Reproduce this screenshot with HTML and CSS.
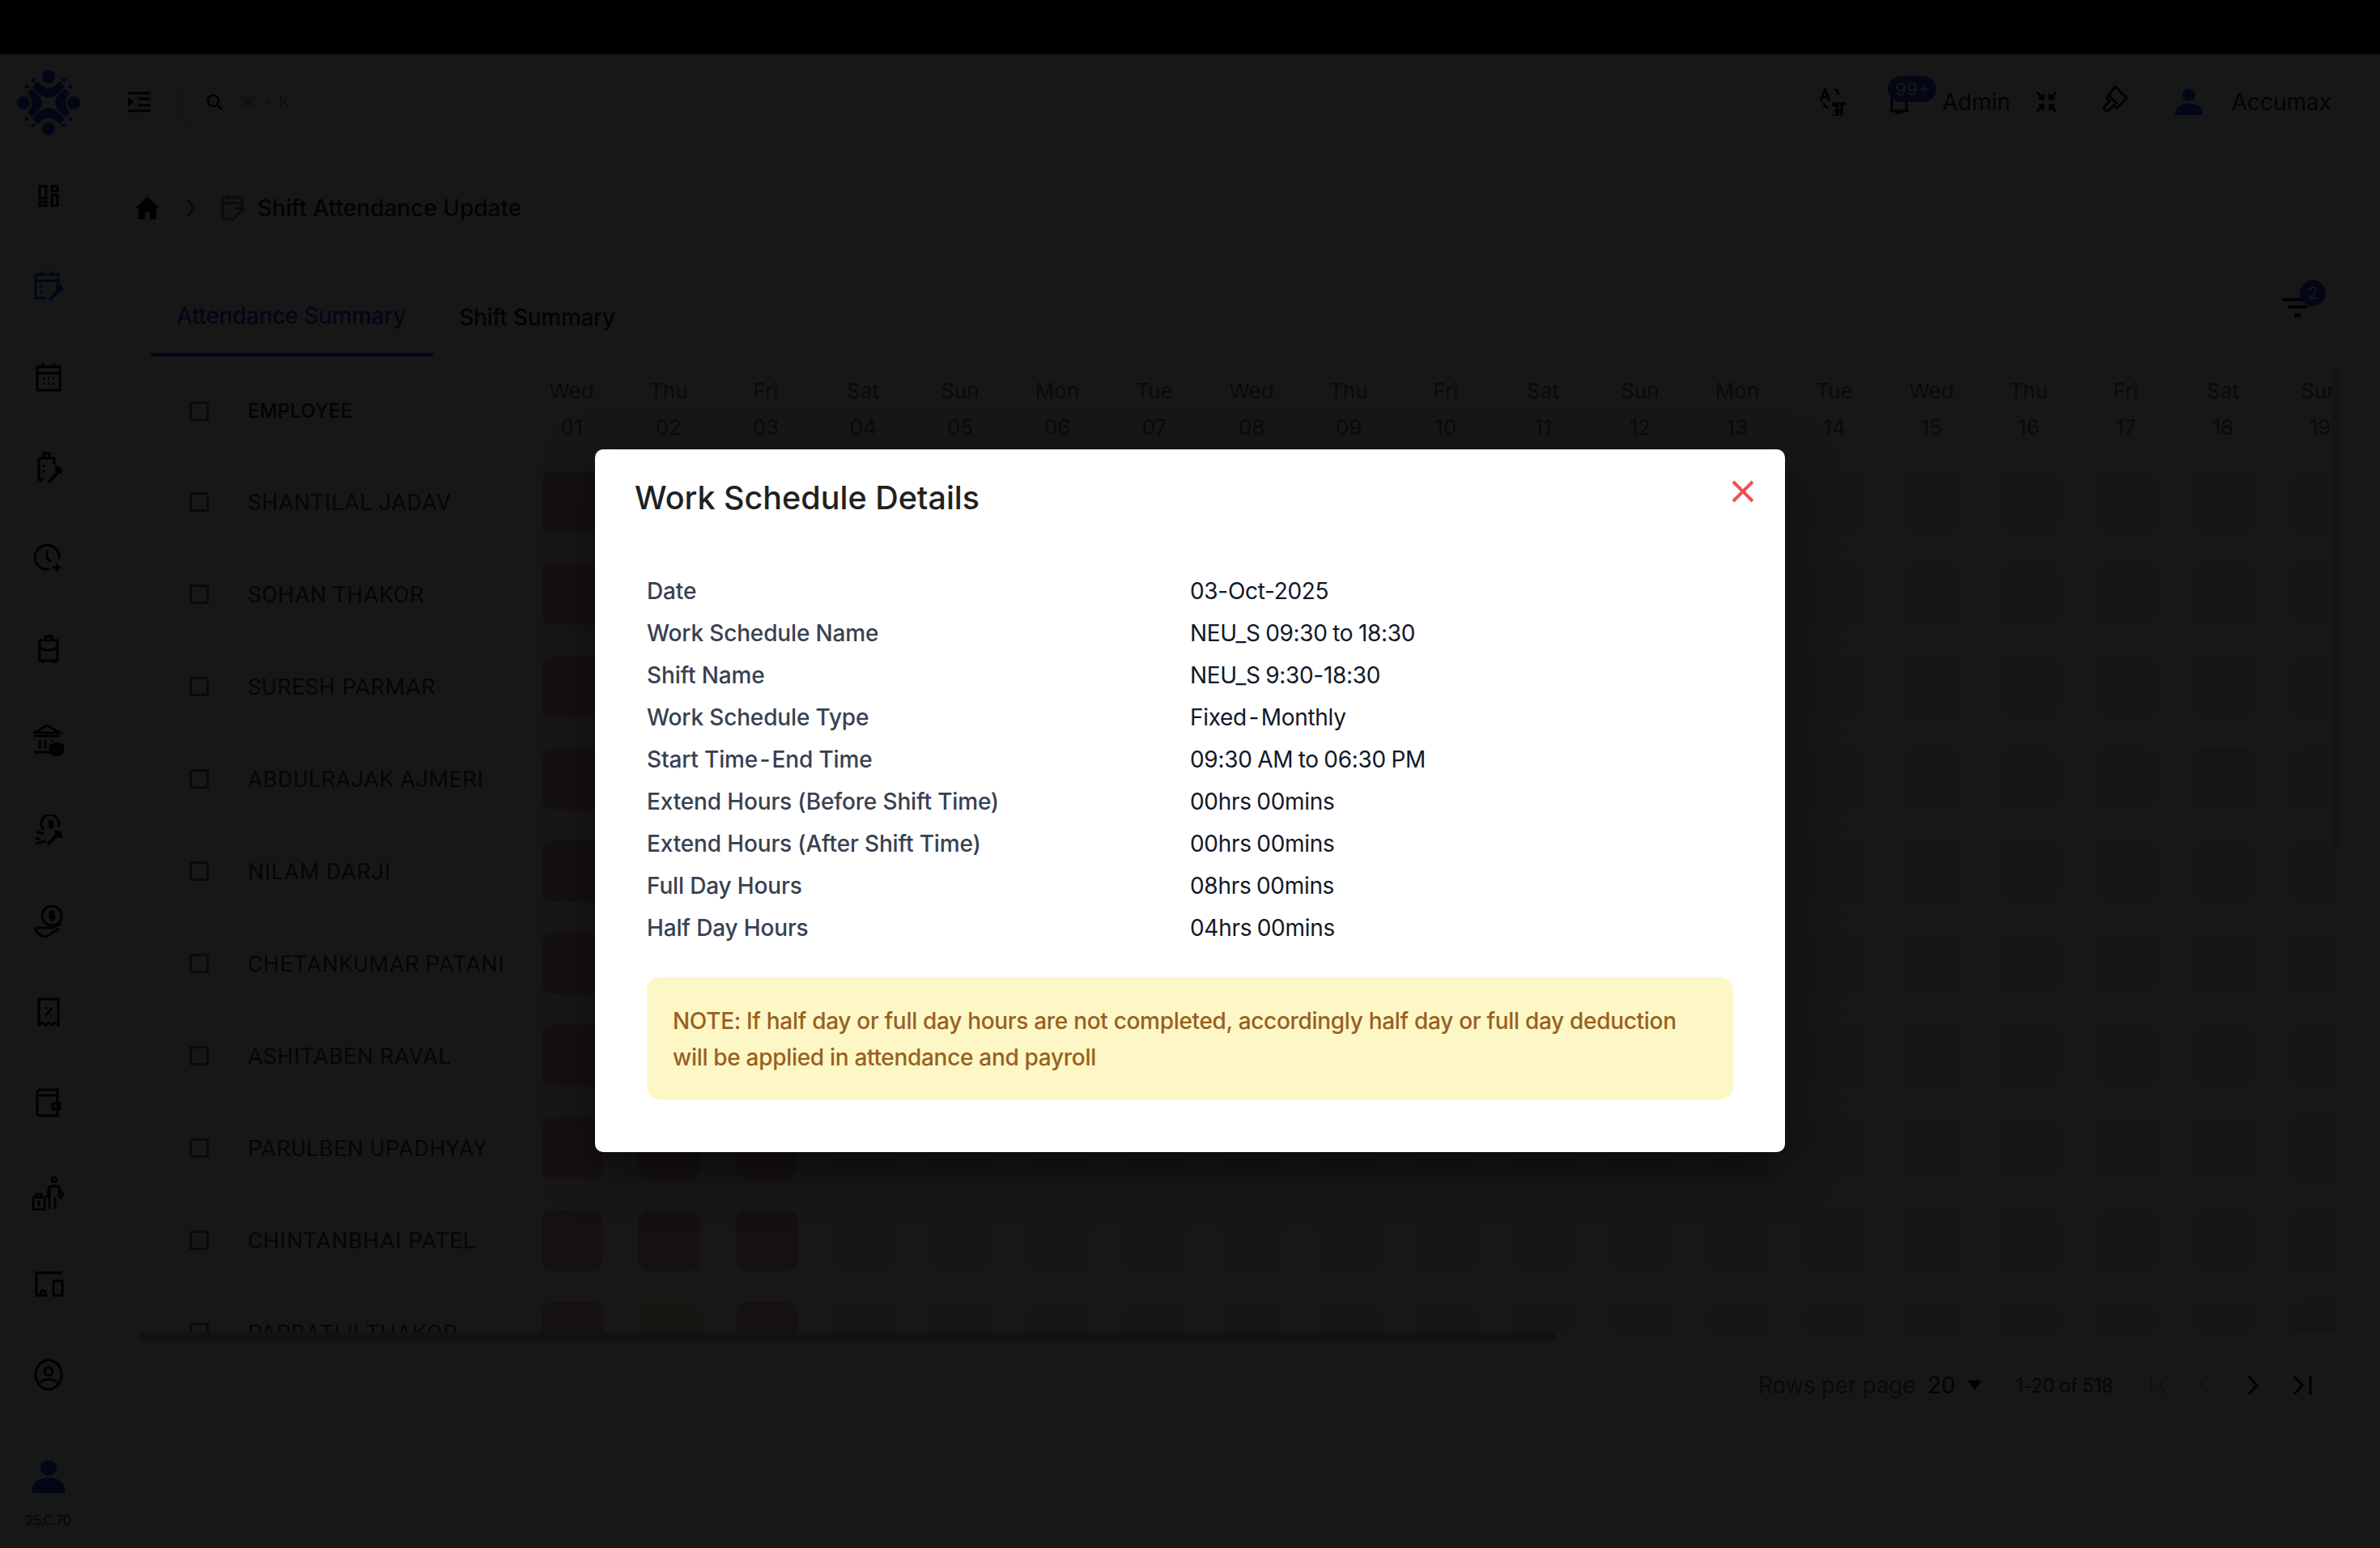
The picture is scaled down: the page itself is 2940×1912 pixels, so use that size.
FILE: index.html
```html
<!DOCTYPE html>
<html>
<head>
  <title>Shift Attendance Update</title>
  <meta name="viewport" content="width=device-width, initial-scale=1.0">
  <link rel="stylesheet" href="styles.css">
</head>
<body>
  <div class="app">
    <aside class="sidebar">
      <div class="logo">
        <svg viewBox="0 0 78 80" width="78" height="80" class="logo-mark">
          <circle cx="39" cy="8" r="8"/>
          <circle cx="39" cy="72" r="8"/>
          <circle cx="8" cy="40" r="8"/>
          <circle cx="70" cy="40" r="8"/>
          <path d="M25 13Q39 30 53 13L59 20Q39 47 19 20z"/>
          <path d="M25 67Q39 50 53 67L59 60Q39 33 19 60z"/>
          <path d="M18 23Q44 40 18 57L13 52Q23 40 13 28z"/>
          <path d="M60 23Q34 40 60 57L65 52Q55 40 65 28z"/>
          <circle cx="20" cy="12" r="2.5"/><circle cx="12" cy="20" r="2.5"/>
          <circle cx="58" cy="12" r="2.5"/><circle cx="66" cy="20" r="2.5"/>
          <circle cx="12" cy="60" r="2.5"/><circle cx="20" cy="68" r="2.5"/>
          <circle cx="58" cy="68" r="2.5"/><circle cx="66" cy="60" r="2.5"/>
        </svg>
      </div>
      <nav class="side-menu">
        <a class="side-item">
          <svg viewBox="0 0 26 28" width="26" height="28" class="icon"><path d="M2 2h8v15H2zM17 2h7v6h-7zM17 13h7v13h-7zM2 21h8v5H2z"/></svg>
        </a>
        <a class="side-item active">
          <svg viewBox="0 0 36 40" width="36" height="40" class="icon"><path d="M10 1v6M23 1v6M2 5h28v14M2 5v29h12M2 13h28M8 20h2M8 27h2"/><path d="M19 37l11-12M27 19a5 5 0 0 1 7 5l-3 0-2-2 0-3z" class="icon-thick"/></svg>
        </a>
        <a class="side-item">
          <svg viewBox="0 0 32 36" width="32" height="36" class="icon"><path d="M9 1v6M23 1v6M2 5h28v29H2zM2 13h28"/><path d="M9 19h2M15 19h2M21 19h2M9 26h2M15 26h2M21 26h2"/></svg>
        </a>
        <a class="side-item">
          <svg viewBox="0 0 36 40" width="36" height="40" class="icon"><path d="M12 8V2h7v6M6 8h19v8M6 8v26h2v3M6 34h6M12 16v3M10 24h3"/><path d="M18 38l12-13M26 20a5 5 0 0 1 7 5l-3 0-2-2 0-3z" class="icon-thick"/></svg>
        </a>
        <a class="side-item">
          <svg viewBox="0 0 36 36" width="36" height="36" class="icon"><path d="M31 19A15 15 0 1 0 19 31M16 8v9l5 5M28 24v10M23 29h10"/></svg>
        </a>
        <a class="side-item">
          <svg viewBox="0 0 26 36" width="26" height="36" class="icon"><path d="M9 7V2h8v5M2 7h22v25H2zM2 15l6 4h10l6-4M6 32v3M20 32v3"/></svg>
        </a>
        <a class="side-item">
          <svg viewBox="0 0 38 40" width="38" height="40" class="icon"><path d="M1 11L17 2l16 9zM1 15h32M8 20v11M15 20v11M24 20v2M1 35h20"/><path d="M29 24l8 3v5c0 4-4 6-8 8-4-2-8-4-8-8v-5z" class="icon-fill"/></svg>
        </a>
        <a class="side-item">
          <svg viewBox="0 0 36 40" width="36" height="40" class="icon"><path d="M12 19a11 11 0 1 1 18-4M21 7v11M24 9h-5v3h4v3h-5M3 22l9 1M2 29l6 2M2 36l12-3"/><path d="M17 37l11-11M26 22a5 5 0 0 1 7 5l-3 0-2-2 0-3z" class="icon-thick"/></svg>
        </a>
        <a class="side-item">
          <svg viewBox="0 0 38 40" width="38" height="40" class="icon"><circle cx="23" cy="13" r="12"/><path d="M23 6v14M27 9h-6v4h5v3h-6M2 28h22l11-5M2 30c6 8 12 9 14 9l16-10"/></svg>
        </a>
        <a class="side-item">
          <svg viewBox="0 0 28 36" width="28" height="36" class="icon"><path d="M2 2h24v32l-4-3-4 3-4-3-4 3-4-3-4 3zM10 23l8-10M10 13h2M16 23h2"/></svg>
        </a>
        <a class="side-item">
          <svg viewBox="0 0 34 36" width="34" height="36" class="icon"><path d="M6 2h22v32H6a3 3 0 0 1-3-3V5a3 3 0 0 1 3-3zM3 9h25M22 19h9v7h-9z"/></svg>
        </a>
        <a class="side-item">
          <svg viewBox="0 0 42 42" width="42" height="42" class="icon"><circle cx="28" cy="4" r="3"/><path d="M22 12h12v14M22 12v28M22 12l-3 14M29 26v14M34 16l5 6-4 6M2 26h14v15H2zM6 26v-4h6v4M9 30v7"/></svg>
        </a>
        <a class="side-item">
          <svg viewBox="0 0 38 32" width="38" height="32" class="icon"><path d="M36 2H4v28h14M25 12h11v18H25zM12 24a3 3 0 1 0 .1 0z"/></svg>
        </a>
        <a class="side-item">
          <svg viewBox="0 0 36 40" width="36" height="40" class="icon"><ellipse cx="18" cy="20" rx="16" ry="18"/><circle cx="18" cy="16" r="5"/><path d="M7 30c6-6 16-6 22 0"/></svg>
        </a>
      </nav>
      <div class="side-user">
        <div class="avatar-big">
          <svg viewBox="0 0 40 40" width="40" height="40" class="solid-blue"><ellipse cx="20" cy="9" rx="10" ry="9.5"/><path d="M0 40V34a20 13 0 0 1 40 0v6z"/></svg>
        </div>
        <span class="version">25.C.70</span>
      </div>
    </aside>

    <main class="main">
      <header class="topbar">
        <div class="topbar-left">
          <button class="menu-btn">
            <svg viewBox="0 0 28 26" width="28" height="26" class="icon"><path d="M0 2h28M12 9h16M12 17h16M0 24h28"/><path d="M0 9l5 4-5 4z" class="icon-fill"/></svg>
          </button>
          <div class="search">
            <svg viewBox="0 0 24 24" width="20" height="20" class="icon"><circle cx="10" cy="10" r="8"/><path d="M16 16l7 7"/></svg>
            <span>⌘ + K</span>
          </div>
        </div>
        <div class="topbar-right">
          <svg viewBox="0 0 32 34" width="32" height="34" class="icon tb-translate"><path d="M1 16L6.500 1 12 16M3 11h7M18 2c3 0 5 2 5 6M5 18c0 4 3 6 6 6M15 19h17M27 19v15M16 22c4-2 7 0 6 3 0 2-3 3-4 3 3 0 5 1 4 4-1 2-4 2-6 1M22 27h5"/></svg>
          <div class="bell">
            <svg viewBox="0 0 24 24" width="24" height="24" class="icon"><path d="M3 0v19M21 0v19M0 20h24M8 22c1 2 7 2 8 0"/></svg>
            <span class="bell-badge">99+</span>
          </div>
          <span class="admin">Admin</span>
          <div class="tb-box">
            <svg viewBox="0 0 26 26" width="26" height="26" class="icon"><path d="M1 1l8 8M9 3v6H3M25 1l-8 8M17 3v6h6M1 25l8-8M9 23v-6H3M25 25l-8-8M17 23v-6h6"/></svg>
          </div>
          <svg viewBox="0 0 34 34" width="34" height="34" class="icon tb-brush"><path d="M18 2l14 14-12 13-4-4-6 6a3 3 0 0 1-5-1 3 3 0 0 1 0-4l6-6-4-4zM9 12l12 12"/></svg>
          <div class="tb-avatar">
            <svg viewBox="0 0 34 32" width="34" height="32" class="solid-blue"><ellipse cx="17" cy="7.500" rx="8" ry="7.500"/><path d="M0 32V28a17 10 0 0 1 34 0v4z"/></svg>
          </div>
          <span class="accumax">Accumax</span>
        </div>
      </header>

      <div class="breadcrumb">
        <svg viewBox="0 0 30 30" width="30" height="30" class="solid-dark"><path d="M15 1L0 15h4v14h8v-9h6v9h8V15h4z"/></svg>
        <svg viewBox="0 0 12 22" width="12" height="22" class="icon icon-dim"><path d="M2 1l8 10-8 10"/></svg>
        <svg viewBox="0 0 30 34" width="30" height="34" class="icon icon-dim"><path d="M8 1v5M20 1v5M2 4h24v12M2 4v26h10M2 11h24M7 17h1M7 23h1"/><path d="M14 32l10-11M22 17a4 4 0 0 1 6 4l-3 0-1-2 0-2z"/></svg>
        <span>Shift Attendance Update</span>
      </div>

      <section class="card">
        <div class="tabs">
          <a class="tab active">Attendance Summary</a>
          <a class="tab">Shift Summary</a>
          <div class="filter">
            <svg viewBox="0 0 36 24" width="36" height="24" class="solid-dark"><path d="M0 0h36v4H0zM6 9h24v4H6zM14 19h8v5h-8z"/></svg>
            <span class="filter-badge">2</span>
          </div>
        </div>

        <div class="table-wrap">
          <div class="t-head">
            <div class="t-emp"><span class="check"></span><span class="t-title">EMPLOYEE</span></div>
            <div class="day"><span>Wed</span><span>01</span></div>
            <div class="day"><span>Thu</span><span>02</span></div>
            <div class="day"><span>Fri</span><span>03</span></div>
            <div class="day"><span>Sat</span><span>04</span></div>
            <div class="day"><span>Sun</span><span>05</span></div>
            <div class="day"><span>Mon</span><span>06</span></div>
            <div class="day"><span>Tue</span><span>07</span></div>
            <div class="day"><span>Wed</span><span>08</span></div>
            <div class="day"><span>Thu</span><span>09</span></div>
            <div class="day"><span>Fri</span><span>10</span></div>
            <div class="day"><span>Sat</span><span>11</span></div>
            <div class="day"><span>Sun</span><span>12</span></div>
            <div class="day"><span>Mon</span><span>13</span></div>
            <div class="day"><span>Tue</span><span>14</span></div>
            <div class="day"><span>Wed</span><span>15</span></div>
            <div class="day"><span>Thu</span><span>16</span></div>
            <div class="day"><span>Fri</span><span>17</span></div>
            <div class="day"><span>Sat</span><span>18</span></div>
            <div class="day"><span>Sun</span><span>19</span></div>
          </div>

          <div class="t-row">
            <div class="t-emp"><span class="check"></span><span class="name">SHANTILAL JADAV</span></div>
            <div class="cells"><i class="red"></i><i class="red"></i><i class="red"></i><i></i><i></i><i></i><i></i><i></i><i></i><i></i><i></i><i></i><i></i><i></i><i></i><i></i><i></i><i class="off"></i><i></i></div>
          </div>
          <div class="t-row">
            <div class="t-emp"><span class="check"></span><span class="name">SOHAN THAKOR</span></div>
            <div class="cells"><i class="red"></i><i class="red"></i><i class="red"></i><i></i><i></i><i></i><i></i><i></i><i></i><i></i><i></i><i></i><i></i><i></i><i></i><i></i><i></i><i></i><i></i></div>
          </div>
          <div class="t-row">
            <div class="t-emp"><span class="check"></span><span class="name">SURESH PARMAR</span></div>
            <div class="cells"><i class="red"></i><i class="red"></i><i class="red"></i><i></i><i></i><i></i><i></i><i></i><i></i><i></i><i></i><i></i><i></i><i></i><i></i><i></i><i></i><i class="off"></i><i></i></div>
          </div>
          <div class="t-row">
            <div class="t-emp"><span class="check"></span><span class="name">ABDULRAJAK AJMERI</span></div>
            <div class="cells"><i class="red"></i><i class="red"></i><i class="red"></i><i></i><i></i><i></i><i></i><i></i><i></i><i></i><i></i><i></i><i></i><i></i><i></i><i></i><i></i><i class="off"></i><i></i></div>
          </div>
          <div class="t-row">
            <div class="t-emp"><span class="check"></span><span class="name">NILAM DARJI</span></div>
            <div class="cells"><i class="red"></i><i class="red"></i><i class="red"></i><i></i><i></i><i></i><i></i><i></i><i></i><i></i><i></i><i></i><i></i><i></i><i></i><i></i><i></i><i></i><i></i></div>
          </div>
          <div class="t-row">
            <div class="t-emp"><span class="check"></span><span class="name">CHETANKUMAR PATANI</span></div>
            <div class="cells"><i class="red"></i><i class="red"></i><i class="red"></i><i></i><i></i><i></i><i></i><i></i><i></i><i></i><i></i><i></i><i></i><i></i><i></i><i></i><i></i><i></i><i></i></div>
          </div>
          <div class="t-row">
            <div class="t-emp"><span class="check"></span><span class="name">ASHITABEN RAVAL</span></div>
            <div class="cells"><i class="red"></i><i class="red"></i><i class="red"></i><i></i><i></i><i></i><i></i><i></i><i></i><i></i><i></i><i></i><i></i><i></i><i></i><i></i><i></i><i></i><i></i></div>
          </div>
          <div class="t-row">
            <div class="t-emp"><span class="check"></span><span class="name">PARULBEN UPADHYAY</span></div>
            <div class="cells"><i class="red"></i><i class="red"></i><i class="red"></i><i></i><i></i><i></i><i></i><i></i><i></i><i></i><i></i><i></i><i></i><i></i><i></i><i></i><i></i><i></i><i class="off"></i></div>
          </div>
          <div class="t-row">
            <div class="t-emp"><span class="check"></span><span class="name">CHINTANBHAI PATEL</span></div>
            <div class="cells"><i class="red"></i><i class="red"></i><i class="red"></i><i></i><i></i><i></i><i></i><i></i><i></i><i></i><i></i><i></i><i></i><i></i><i></i><i></i><i></i><i></i><i class="off"></i></div>
          </div>
          <div class="t-row">
            <div class="t-emp"><span class="check"></span><span class="name">PARBATIJI THAKOR</span></div>
            <div class="cells"><i class="red"></i><i class="green"></i><i class="red"></i><i></i><i></i><i></i><i></i><i></i><i></i><i></i><i></i><i></i><i></i><i></i><i></i><i></i><i></i><i></i><i class="off"></i></div>
          </div>
        </div>
        <div class="h-scroll"><div class="h-thumb"></div></div>
        <div class="v-thumb"></div>

        <div class="pager">
          <span class="pg-label">Rows per page</span>
          <span class="pg-size">20</span>
          <svg viewBox="0 0 18 12" width="18" height="12" class="solid-dark pg-caret"><path d="M0 0h18L9 12z"/></svg>
          <span class="pg-count">1-20 of 518</span>
          <div class="pg-btns">
            <svg viewBox="0 0 26 26" width="26" height="26" class="icon icon-faint"><path d="M2 1v24M22 2L12 13l10 11"/></svg>
            <svg viewBox="0 0 26 26" width="26" height="26" class="icon icon-faint"><path d="M18 2L8 13l10 11"/></svg>
            <svg viewBox="0 0 26 26" width="26" height="26" class="icon"><path d="M8 2l10 11L8 24"/></svg>
            <svg viewBox="0 0 26 26" width="26" height="26" class="icon"><path d="M4 2l10 11L4 24M24 1v24"/></svg>
          </div>
        </div>
      </section>
    </main>

    <div class="overlay">
      <div class="modal">
        <h2 class="modal-title">Work Schedule Details</h2>
        <button class="modal-close">
          <svg viewBox="0 0 28 28" width="28" height="28"><path d="M2 2l24 24M26 2L2 26"/></svg>
        </button>
        <div class="details">
          <div class="d-label">Date</div><div class="d-value">03-Oct-2025</div>
          <div class="d-label">Work Schedule Name</div><div class="d-value">NEU_S 09:30 to 18:30</div>
          <div class="d-label">Shift Name</div><div class="d-value">NEU_S 9:30-18:30</div>
          <div class="d-label">Work Schedule Type</div><div class="d-value">Fixed<span class="d-dash"> - </span>Monthly</div>
          <div class="d-label">Start Time<span class="d-dash"> - </span>End Time</div><div class="d-value">09:30 AM to 06:30 PM</div>
          <div class="d-label">Extend Hours (Before Shift Time)</div><div class="d-value">00hrs 00mins</div>
          <div class="d-label">Extend Hours (After Shift Time)</div><div class="d-value">00hrs 00mins</div>
          <div class="d-label">Full Day Hours</div><div class="d-value">08hrs 00mins</div>
          <div class="d-label">Half Day Hours</div><div class="d-value">04hrs 00mins</div>
        </div>
        <div class="note">NOTE: If half day or full day hours are not completed, accordingly half day or full day deduction will be applied in attendance and payroll</div>
      </div>
    </div>
  </div>
</body>
</html>
```
FILE: styles.css
```css
* {
  margin: 0;
  padding: 0;
  box-sizing: border-box;
}

html,
body {
  height: 100%;
}

body {
  background: #000;
  font-family: Inter, "Liberation Sans", sans-serif;
  color: #1f2937;
  overflow: hidden;
}

.app {
  position: relative;
  margin-top: 67px;
  height: 1845px;
  display: flex;
  background: #fff;
}

/* sidebar */
.sidebar {
  width: 121px;
  flex-shrink: 0;
  border-right: 2px solid #f3f4f6;
  display: flex;
  flex-direction: column;
  align-items: center;
}

.logo {
  height: 119px;
  display: flex;
  align-items: center;
  justify-content: center;
}

.logo-mark {
  fill: #1748e0;
}

.icon {
  fill: none;
  stroke: #111;
  stroke-width: 3;
}

.icon-thick {
  stroke-width: 4;
}

.icon-fill {
  fill: #111;
}

.icon-dim {
  stroke: #6b7280;
}

.icon-faint {
  stroke: #c4c8ce;
}

.solid-dark {
  fill: #111;
}

.solid-blue {
  fill: #1748e0;
}

.side-menu {
  width: 100%;
  height: 1574px;
  display: flex;
  flex-direction: column;
  align-items: center;
  border-bottom: 2px solid #f3f4f6;
}

.side-item {
  width: 72px;
  height: 112px;
  display: flex;
  align-items: center;
  justify-content: center;
  flex-shrink: 0;
  position: relative;
}

.side-item.active::before {
  content: "";
  position: absolute;
  left: 0;
  right: 0;
  top: 22px;
  height: 68px;
  border-radius: 12px;
  background: #eff6ff;
}

.side-item.active svg {
  position: relative;
  stroke: #1748e0;
}

.side-user {
  display: flex;
  flex-direction: column;
  align-items: center;
  gap: 8px;
  margin-top: 28px;
}

.avatar-big {
  width: 72px;
  height: 72px;
  border-radius: 50%;
  background: #eff6ff;
  display: flex;
  align-items: center;
  justify-content: center;
}

.version {
  font-size: 17px;
  color: #374151;
  letter-spacing: -0.8px;
}

/* main column */
.main {
  flex: 1;
  min-width: 0;
  display: flex;
  flex-direction: column;
}

.topbar {
  height: 119px;
  flex-shrink: 0;
  border-bottom: 2px solid #f3f4f6;
  display: flex;
  justify-content: space-between;
  align-items: center;
  padding-right: 60px;
}

.topbar-left {
  display: flex;
  align-items: center;
}

.menu-btn {
  width: 70px;
  height: 70px;
  margin-left: 16px;
  background: #fafafa;
  border: none;
  border-radius: 10px;
  display: flex;
  align-items: center;
  justify-content: center;
}

.search {
  width: 446px;
  height: 62px;
  margin-left: 18px;
  border: 2px solid #e5e7eb;
  border-radius: 12px;
  display: flex;
  align-items: center;
  gap: 20px;
  padding-left: 28px;
  font-size: 22px;
  color: #9ca3af;
}

.topbar-right {
  display: flex;
  align-items: center;
}

.tb-translate {
  margin-right: 54px;
}

.bell {
  position: relative;
  width: 24px;
  height: 24px;
  margin-top: 6px;
  margin-right: 41px;
}

.bell-badge {
  position: absolute;
  left: -2px;
  top: -23px;
  width: 60px;
  height: 32px;
  border-radius: 16px;
  background: #1748e0;
  color: #fff;
  font-size: 22px;
  line-height: 32px;
  text-align: center;
}

.admin,
.accumax {
  font-size: 28px;
  color: #1f2937;
}

.tb-box {
  width: 69px;
  height: 66px;
  margin-left: 10px;
  margin-right: 32px;
  background: #fafafa;
  border-radius: 8px;
  display: flex;
  align-items: center;
  justify-content: center;
}

.tb-brush {
  margin-top: -8px;
  margin-right: 45px;
}

.tb-avatar {
  width: 60px;
  height: 60px;
  border-radius: 50%;
  background: #f3f6fc;
  display: flex;
  align-items: center;
  justify-content: center;
  margin-right: 23px;
}

.breadcrumb {
  height: 141px;
  flex-shrink: 0;
  padding-left: 46px;
  display: flex;
  align-items: center;
  gap: 19px;
  font-size: 28px;
  font-weight: 500;
  color: #1f2937;
}

.breadcrumb svg:nth-child(2) {
  margin-left: 14px;
  margin-right: 12px;
}

.breadcrumb svg:nth-child(3) {
  margin-right: -4px;
}

/* card */
.card {
  position: relative;
  width: 2720px;
  margin-left: 49px;
  height: 1441px;
  border: 2px solid #f3f4f6;
  border-radius: 12px;
  flex-shrink: 0;
}

.tabs {
  height: 126px;
  display: flex;
  position: relative;
}

.tab {
  display: flex;
  align-items: center;
  height: 111px;
  padding: 15px 34px 0 32px;
  font-size: 28px;
  font-weight: 500;
  letter-spacing: -0.3px;
  color: #1f2937;
  margin-left: 14px;
}

.tab + .tab {
  margin-left: 0;
}

.tab.active {
  color: #1748e0;
  border-bottom: 4px solid #1748e0;
}

.filter {
  position: absolute;
  right: 32px;
  top: 39px;
}

.filter-badge {
  position: absolute;
  left: 21px;
  top: -22px;
  width: 32px;
  height: 32px;
  border-radius: 50%;
  background: #1748e0;
  color: #fff;
  font-size: 20px;
  line-height: 32px;
  text-align: center;
}

.table-wrap {
  height: 1190px;
  overflow: hidden;
  margin-right: 2px;
}

.t-head,
.t-row {
  display: flex;
  width: 2800px;
}

.t-head {
  height: 107px;
  background: #fafafa;
}

.t-row {
  height: 114px;
  border-top: 2px solid #f3f4f6;
}

.t-emp {
  width: 476px;
  flex-shrink: 0;
  display: flex;
  align-items: center;
  padding-left: 62px;
  gap: 48px;
  border-right: 2px solid #f3f4f6;
}

.t-head .t-emp {
  width: 474px;
  padding-bottom: 2px;
}

.check {
  width: 24px;
  height: 24px;
  border: 3px solid #6b7280;
  border-radius: 3px;
  flex-shrink: 0;
}

.t-title {
  font-size: 24px;
  font-weight: 500;
  letter-spacing: 0.2px;
  color: #1f2937;
}

.name {
  font-family: Roboto, sans-serif;
  font-size: 28px;
  letter-spacing: 0.7px;
  color: #374151;
  white-space: nowrap;
}

.day {
  width: 120px;
  flex-shrink: 0;
  display: flex;
  flex-direction: column;
  align-items: center;
  gap: 14px;
  font-size: 26px;
  color: #6b7280;
  padding-top: 12px;
}

.cells {
  display: flex;
  gap: 44px;
  padding-left: 21px;
  align-items: center;
}

.cells i {
  width: 76px;
  height: 76px;
  border-radius: 14px;
  background: #ebebeb;
  flex-shrink: 0;
}

.cells .off {
  background: #e4e4e4;
}

.cells .red {
  background: #e9bdb2;
}

.cells .green {
  background: #f0f6b4;
}

.h-scroll {
  height: 12px;
}

.h-thumb {
  width: 1750px;
  height: 12px;
  border-radius: 6px;
  background: #c8c8c8;
}

.v-thumb {
  position: absolute;
  right: -2px;
  top: 126px;
  width: 10px;
  height: 590px;
  border-radius: 5px;
  background: #d4d4d4;
}

.pager {
  height: 108px;
  display: flex;
  align-items: center;
  justify-content: flex-end;
  padding-right: 32px;
  color: #4b5563;
}

.pg-label {
  font-size: 28px;
  letter-spacing: -0.3px;
  color: #6b7280;
}

.pg-size {
  font-size: 28px;
  color: #1f2937;
  margin-left: 15px;
}

.pg-caret {
  margin-left: 14px;
}

.pg-count {
  font-size: 24px;
  letter-spacing: -0.5px;
  margin-left: 42px;
  color: #374151;
}

.pg-btns {
  display: flex;
  gap: 34px;
  margin-left: 40px;
}

.pg-btns svg:first-child {
  margin-left: 5px;
  margin-right: -5px;
}

/* dimmed backdrop and dialog */
.overlay {
  position: absolute;
  inset: 0;
  background: rgba(0, 0, 0, 0.91);
  display: flex;
  align-items: center;
  justify-content: center;
}

.modal {
  position: relative;
  width: 1470px;
  height: 868px;
  margin-top: -1px;
  padding: 35px 64px 0;
  background: #fff;
  border-radius: 10px;
  box-shadow: 0 20px 60px rgba(0, 0, 0, 0.5);
}

.modal-title {
  margin-left: -15px;
  font-size: 39.500px;
  line-height: 50px;
  font-weight: 500;
  color: #212121;
}

.modal-close {
  position: absolute;
  top: 38px;
  right: 38px;
  width: 28px;
  height: 28px;
  border: none;
  background: none;
}

.modal-close svg {
  display: block;
  fill: none;
  stroke: #ef5350;
  stroke-width: 4;
}

.details {
  display: grid;
  grid-template-columns: 671px 1fr;
  grid-auto-rows: 52px;
  margin-top: 64px;
  font-size: 28px;
  line-height: 52px;
}

.d-label {
  font-weight: 500;
  letter-spacing: -0.15px;
  color: #374151;
}

.d-value {
  letter-spacing: -0.3px;
  word-spacing: -1px;
  color: #111827;
}

.d-dash {
  word-spacing: -5px;
}

.note {
  margin-top: 35px;
  padding: 32px 32px 29px;
  background: #fdf7c6;
  border-radius: 16px;
  font-size: 28px;
  line-height: 45px;
  font-weight: 500;
  letter-spacing: -0.31px;
  color: #98601f;
}
```
